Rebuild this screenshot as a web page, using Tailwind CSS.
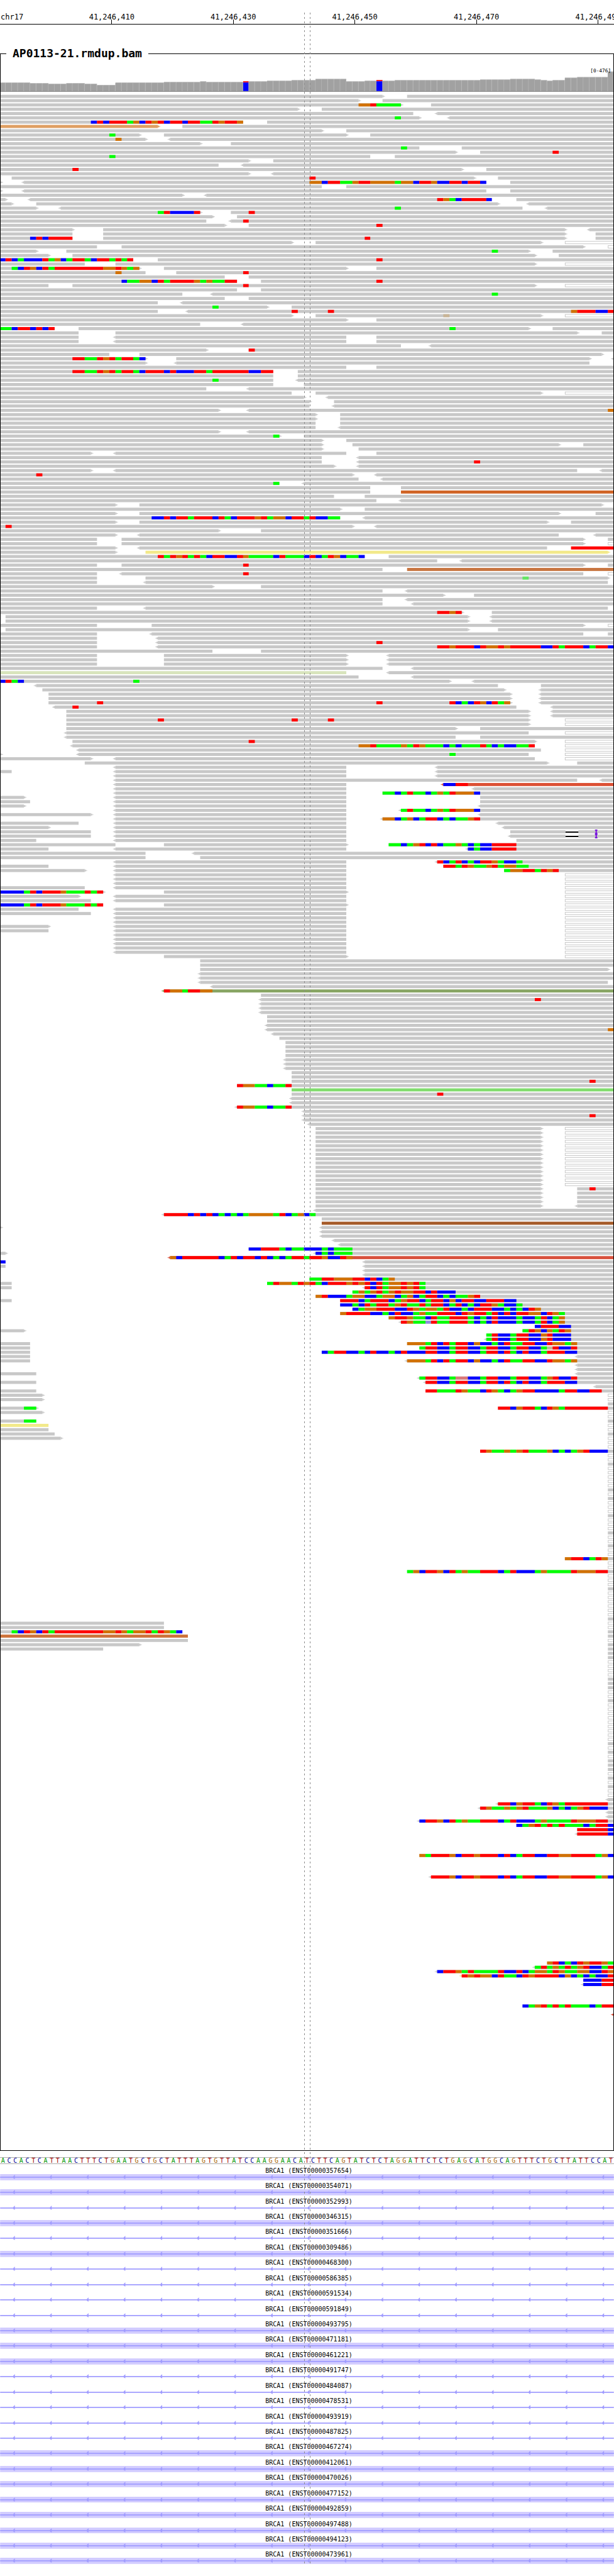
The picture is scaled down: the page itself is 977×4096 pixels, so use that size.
<!DOCTYPE html>
<html lang="en">
<head>
<meta charset="utf-8">
<meta name="viewport" content="width=device-width, initial-scale=1">
<title>chr17 BRCA1 – AP0113-21.rmdup.bam</title>
<script src="https://cdn.jsdelivr.net/npm/@tailwindcss/browser@4"></script>
</head>
<body class="bg-white text-black font-['DejaVu_Sans_Mono',monospace]">
<main class="relative overflow-hidden pb-5">

  <!-- Genomic ruler -->
  <header class="flex h-[39px] items-end overflow-hidden border-b border-black text-[12px] leading-[14px] whitespace-nowrap">
    <div class="w-[8.3%] shrink-0 pb-1 pl-px">chr17</div>
    <div class="flex w-[19.8%] shrink-0 flex-col items-center"><span class="-mb-[3px]">41,246,410</span><i class="h-[7px] w-px bg-black"></i></div>
    <div class="flex w-[19.8%] shrink-0 flex-col items-center"><span class="-mb-[3px]">41,246,430</span><i class="h-[7px] w-px bg-black"></i></div>
    <div class="flex w-[19.8%] shrink-0 flex-col items-center"><span class="-mb-[3px]">41,246,450</span><i class="h-[7px] w-px bg-black"></i></div>
    <div class="flex w-[19.8%] shrink-0 flex-col items-center"><span class="-mb-[3px]">41,246,470</span><i class="h-[7px] w-px bg-black"></i></div>
    <div class="flex w-[19.8%] shrink-0 flex-col items-center"><span class="-mb-[3px]">41,246,490</span><i class="h-[7px] w-px bg-black"></i></div>
  </header>

  <!-- Alignment track -->
  <fieldset class="mt-[34px] min-w-0 border border-black">
    <legend class="ml-[9px] px-[10px] text-[18px] leading-6 font-bold">AP0113-21.rmdup.bam</legend>
    <svg id="reads" viewBox="0 99 1000 3400" class="-mx-px block h-auto w-[calc(100%+2px)] max-w-none" role="img" aria-label="Coverage and aligned reads"></svg>
  </fieldset>

  <!-- Reference sequence -->
  <div id="sequence" class="mt-[10px] flex h-[11px] border-y border-[#aaaaaa] text-[10px] leading-[10px]"></div>

  <!-- Transcripts -->
  <ul id="genes" class="mt-px grid h-[635px] auto-rows-fr text-[10px]"></ul>

  <!-- Centre column guides -->
  <div class="absolute top-5 bottom-5 left-[49.5%] w-px bg-[repeating-linear-gradient(#8c8c8c_0_3px,transparent_3px_7px)]"></div>
  <div class="absolute top-5 bottom-5 left-[50.5%] w-px bg-[repeating-linear-gradient(#8c8c8c_0_3px,transparent_3px_7px)]"></div>
</main>

<script>
// One line per pileup row, units are bases (0-101):
//   a-b   read block, "<" / ">" add a strand arrow, "#rrggbb" sets its colour
//   oN    hollow read from N to the right edge
//   N:ACG mismatching bases from N (lower case = low quality)
//   xN    repeat the row N times, "." empty row
const rows = `
0-63> 67-101
0-59> 63-101
0-66> 71-101 59:GGTAAAA
0-49> 53-101
0-68 <72-101
0-69> <74-101 65:A
0-40 44-101 15:CTCTTTAGCTGTCTTCTTAATGTTG
0-26>#df9f63 30-101
0-53> 57-101
0-23> 27-57> 61-101 18:A
0-24> <28-101 19:G
0-33> 38-101
0-69 76-101 66:A
0-75> 79-101 91:T
0-61 65-101 18:A
0-41> 45-101
0-36 <40-101
0-76> 80-101 12:T
0-41> <45-101
2-78> 82-101 51:T
0-0> <4-80 84-101 51:GGCTTAAGTTGGGGAGGCTTGCCTTCTTC
0-53 57-101
0-0> <4-80 84-101
0-30> <34-101
0-1> <5-81 85-101 72:TGACTTTTC
0-2> 6-82> <87-101
0-6> <10-86 <90-101 65:A
0-33> 38-101 26:ATCCCCT 41:T
0-35> 39-101
0-34 <38-101 40:T
0-37> 41-101 62:T
0-12> 17-93> <97-101
0-12 17-93> 98-101
0-12 17-93> 98-101 5:CTCTTTT 60:T
0-48> 52-89> o93
0-16 20-96> o100
0-6> 11-87> 91-101 81:A
0-8> 12-88> 92-101
0-22 26-101 0:CTCACCCTAGCATTACTTATAT 62:T
0-14 19-88> o93
0-23> 27-57> 62-101 2:ACTGCTATTTTTTTTGGTGAG
0-24 29-101 19:G 40:T
0-37 41-101
0-39 43-101 62:T 20:CAAGGCTATTTTGAGAATT
0-8 12-88> o93 40:T
0-39 43-101
0-30 <35-101 81:A
0-37 41-101
0-26 <30-101
0-44> 48-101 35:A
0-26 <31-101 48:T 54:T 94:GTTTCCT
0-48> 52-89> o93 73:g
0-57> 62-101
0-33 <40-101
0-9 13-87> 91-101 74:A 0:AACTTCTCT
0-13 19-95> 99-101
x2 0-13 <19-57 62-101
0-66 <71-101
0-34> 41-101 41:T
0-18 23-99>
0-24> 29-97> <101-101 12:TTAATGTATTAC
0-24> <29-97
0-57 62-101
0-45 49-101 12:TTAATGTATTACTTTCTCCCTTATTTTTTCCTT
0-45 49-101
0-45 <49-101 35:A
0-45 50-101
0-34 <41-101
0-48 52-89> o93
0-50> <54-101
0-51> 55-101
0-51 <55-101
0-36> <41-101 100:G
x2 0-52> 56-101
0-52 56-101
0-52 <56-101
0-36> <41-101
0-46> 50-101 45:A
0-53> 57-101
0-53> 58-92> 96-101
0-53> 59-101
0-15> <19-57 62-101
0-53 <59-101
0-53 <59-101 78:T
0-55> <59-101
0-15> <19-95 <99-101
0-58> <62-101 6:T
0-59 <63-101
0-46 <50-101 45:A
0-61 66-101
0-61 66-101#d06426
0-55 60-101
0-62 <66-101
0-19> 23-99>
0-56> 60-101
0-19> 23-92> 98-101
0-56 <60-101 25:CCTCTTATTTCTACTTTGTAGGCTTATCCAA
0-19> 23-90> 94-101
0-58> <62-101 1:T
0-36> 43-101
0-19> <23-92 <98-101
0-16 20-96> 100-101
0-16 20-96> o100
0-19> <23-90 94:TTTTTTT
0-19> 24-100>#f2e98a
0-60 64-101 26:TATGTATACTTCCTGAAAACTAAACTCATGCAAC
0-72 <76-101
0-16 20-96> 100-101 40:T
0-63 67-101#c87641
0-16 <20-96 o100 40:T
0-16 24-100> 86:a
0-16 <24-100
0-35> 43-101
0-63 <67-101
0-73> 78-101
0-63 <67-101
0-63 <68-101
0-16 <24-100
0-76> 81-101 72:TTGT
x2 1-77> <81-101
0-16 25-96> o100
1-77> 82-101
0-16 <25-96 100-101
0-16 <26-101
0-16 <26-101 62:T
0-16 <26-101 72:TTGTTTCTGGTGTTTTTCCTATTTCATTC
0-35 43-101
x3 0-16 27-57> <64-101
0-63 <68-101
0-57#d8e4bc <64-101
0-59 <68-101
0-74> <78-101 0:CTAC 22:A
<6-82 89-101
7-83> <89-101
x2 8-84> <89-101
8-84> <89-101 16:T 62:T 74:TCACTGCTAG
<9-85 <91-101 12:T
x2 11-87> <91-101
11-87> o93 26:T 48:T 54:T
11-87> o93
11-75> 79-101
<11-87 o93
<11-75 79-101
12-88> o93 41:T
<12-88 o93 59:GGTAAAAGATGAAACACAAATACACCAAT
<13-89 o93
0-0> <13-87 o93 74:A
0-15> <19-88 o93
14-90> 95-101
<19-57 <72-101
0-2 <19-57 <72-101
<19-57 <72-101
<19-95 <99-101
<19-57 <73-101#dc5034 73:CCTT
<19-57 <78-101
<19-57 63-101 63:AACATAACAGATGGGC
0-4> <19-57 79-101
0-5 <19-57 79-101
0-4> <19-57 <79-101
<19-57 <66-101 66:ATAACAGATGGGC
0-15> <19-57 <79-101
<19-57 <63-101 63:GGCAGCATTCACAAGT
0-13 <19-57 <82-101
0-8> <19-57 <83-101
0-15 <19-57 84-101 indel
0-15 <19-57 <84-101 indel
0-6 <19-57 85-101
0-19 27-57> 64-101 64:AACAGTCTCAAGACACCTTTT
0-8 <19-57 <77-101 77:CACCTTTT
0-24 <32-101
0-24 33-101
<19-57 <72-101 72:TCATCACTTGACCA
0-8 <19-57 73-101 73:TTATGAAGTAGGAA
0-14> <19-57 83-101 83:AGGTTATGT
x3 <19-57 o93
0-14 <19-57 o93
0-17> 27-57> o93 0:CCCCATCTTTGAAATAT
0-13> <19-57 o93
0-15 <19-57 o93
0-17 27-57> o93 0:CCCCATCTTTGAAATAT
0-13 <19-57 o93
0-15 <19-57 o93
x2 <19-57 o93
0-8> <19-57 o93
0-8 <19-57 o93
x5 <19-57 o93
27-57> o93
x2 33-101
33-100>
x2 <33-101
<33-100
<35-101
<27-101#88a564 27:TGGATTGG
43-101
<43-101 88:T
x3 <43-101
x2 44-101
<44-101
<44-101 100:G
<45-101
46-101
x4 47-101
x3 <47-101
x2 48-101
48-101 97:T
39-101 39:TGGAACAAT
48-101#82dc6e
48-101 72:T
x2 <48-101
<39-101 39:TGGAACAAT
<50-101
<50-101 97:T
<50-101
<51-101
x14 52-89> o93
52-89> 95-101 97:T
x3 52-89> 95-101
52-89> <95-101
<52-101
<27-101 27:TTTTCTCTCACACAGGGGATCAGCA
53-101
53-101#a55a28
0-0> <53-101
x2 <53-101
<55-101
<56-101
41-101 41:CCTTTACAACCCACAAA
0-1> <52-101 52:CACAAA
<28-101#d8503c 28:GCTTTTTTCATCTTCTCACATTATTGCCTG
0-1 <60-101 0:C
0-1 <60-101
x2 <60-101
51-101 51:AATTGGGTTCTCAG
0-2 44-101 44:ATGGATGTACTTTGTGTCTAGGTGTA
0-2 <60-101 60:TCTAGGTGTA
58-101 58:AGAGTAGTGGTTCTCCC
52-101 52:GTCCCAGGCCAGGCAGCATTCACAAGT
0-2 56-101 56:TTTCATTTCAGTTCATTCGCTTCCTTTCC
56-101 56:CCACTATTAGTAATATTCATCACTTGACCA
58-101 58:CAGGTTTCCTGAGGATCCACTTTCCACACTG
56-101 56:GTTTTCCACTCCAGAATTTCTGTTATCTCTTGGCTGA
64-101 64:GTTGAACTAATTTACACTCCCACCATCAG
<66-101 66:TGAAcTAATTTACACTCCCACCATCAG
88-101 88:CTTTCC
0-4> 86-101 86:ATGCGATG
80-101 80:ATCCATTCCGTCCC
<80-101 80:ATCCATTCCGTCCC
0-5 67-101 67:GGGATCTATTCGCCACTAATTCCTGGAG
0-5 69-101 69:ATTCCATTCCATTCCATTCCAgTCCT
0-5 53-101 53:CATTCCACTCCACTCCCTTCCATTCCATTCTACTCCATTTCC
0-5 <95-101
0-5 <67-101 67:GGGATCTATTCGCCACTAATTCCTGGAG
x2 <95-101
0-6 <95-101
<69-101 69:ATTCCAttCCATTCCATTCCAGTCCT
0-6 <70-101 70:TTCCATTCCATTCTACTCCATTTCC
<98-101
0-6 70-101 70:TTAAATGAACTGACAGTTCCCCATTCCTT
x2 0-7> o100
100-101
0-6> 82-101 4:AA 82:TTCGTTACTGATTTTTTT
0-7> o100
o100
0-6 100-101 4:AA
0-8#f2e98a o100
0-8 o100
0-9 100-101
0-10> o100
x2 o100
79-101 79:TGAAGAGTAAAGCACAGTCCC
x2 o100
100-101
x5 o100
100-101
o100
100-101
x3 o100
100-101
x3 o100
100-101
x2 o100
100-101
x2 o100
93-101 93:GTTCATG
x2 o100
67-101 67:AGCTTGCTAGAATTTCATCCCAGAAAATGGGTT
x3 o100
100-101
x6 o100
100-101
0-27 o100
0-27 o100
0-30 100-101 2:ACTGCTATTTTTTTTGGTGAGGTATGAC
0-31#cd733c 100-101
0-31 o100
0-23> 100-101
0-17 100-101
x2 100-101
x4 o100
x3 100-101
x2 o100
100-101
x9 o100
100-101
o100
100-101
o100
x3 100-101
o100
100-101
o100
100-101
x2 o100
<100-101
<82-101 82:TTCGTTACTGATTTTTTT
<79-101 79:TGAAGAGTAAAGCACAGTCCC
x2 <100-101
<69-101 69:CTTGCTAGAATTTCATCCCAGAAAATGGGTT
85-101 85:CAGTATATAAACATTC
95-101 95:TTTTTC
<95-101 95:TTTTTC
x4 .
69-101 69:GATTTGCTTGTTTCTCATTCCTTGGTTTTAGC
x4 .
<71-101 71:TTTGCTTGTTTCTCATTCCTTGGTTTTAGC
x19 .
90-101 90:GTCACTGTTGA
<88-101 88:ATAGATAGTCCAT
<72-101 72:CTTGATAAAATCCTCAGGATGAAGGCCTG
<76-101#f2e98a 76:TGTGGCTAACTGTTTTCGCACACCT
96-101 96:CCCTT
<96-101 96:CCCTT
x4 .
86-101 86:CAGTATATAAACATT
.
<101-101#d8503c
`.trim().split("\n").flatMap(l => {
  const m = l.match(/^x(\d+) (.*)$/);
  return m ? Array(+m[1]).fill(m[2]) : [l];
});

const baseColour = {A:"#00ff00",C:"#0000ff",T:"#ff0000",G:"#d17105",a:"#64e664",c:"#8c8cdc",t:"#dc7878",g:"#c8b496"};
const GRAY = "#c8c8c8";
const X = c => Math.min(999, Math.max(1, Math.floor(c * 9.901)));
let out = "";
const rect = (x, y, w, h, f) => { if (w > 0 && h > 0) out += `<rect x="${x}" y="${y}" width="${w}" height="${h}" fill="${f}"/>`; };

// Coverage histogram: [first column, top]
const tops = [[0,134],[5,135],[8,136],[11,135],[14,136],[16,138],[19,134],[27,133],[33,132],[34,133],[40,132],[44,131],[48,130],[52,128],[57,132],[60,131],[62,130],[63,131],[65,130],[79,129],[84,128],[88,129],[89,130],[90,131],[91,130],[93,126],[95,125],[100,116]];
tops.forEach(([c, t], i) => {
  const end = i + 1 < tops.length ? tops[i + 1][0] : 101;
  for (let k = c; k < end; k++) {
    const x = X(k), w = X(k + 1) - x;
    if (k === 40 || k === 62) {
      rect(x, t, w, 2, "#ff0000");
      rect(x, t + 2, w, 146 - t, "#0000ff");
    } else {
      rect(x, t, w, 148 - t, "#b0b0b0");
      rect(x, t + 1, w - 1, 147 - t, "#a1a1a1");
    }
  }
});
rect(1, 148, 998, 1, "#787878");
out += `<text x="995" y="117" text-anchor="end" class="text-[8px]">[0-476]</text>`;

rows.forEach((line, r) => {
  const y = 154 + 7 * r;
  for (const tok of line.split(" ")) {
    let m;
    if ((m = tok.match(/^(<?)(\d+)-(\d+)(>?)(#\w+)?$/))) {
      const f = m[5] || GRAY, a = X(+m[2]), b = X(+m[3]);
      rect(a, y, b - a, 5, f);
      if (m[1]) { rect(a - 2, y + 1, 2, 3, f); rect(a - 4, y + 2, 2, 1, f); }
      if (m[4]) { rect(b, y + 1, 2, 3, f); rect(b + 2, y + 2, 2, 1, f); }
    } else if ((m = tok.match(/^o(\d+)$/))) {
      const a = X(+m[1]);
      rect(a, y, 999 - a, 5, GRAY);
      rect(a + 1, y + 1, 998 - a, 3, "#ffffff");
    } else if ((m = tok.match(/^(\d+):(\w+)$/))) {
      let c = +m[1];
      for (const run of m[2].match(/(.)\1*/g)) {
        rect(X(c), y, X(c + run.length) - X(c), 5, baseColour[run[0]]);
        c += run.length;
      }
    } else if (tok === "indel") {
      rect(921, y, 21, 5, "#ffffff");
      rect(921, y + 2, 21, 2, "#000000");
      rect(970, y - 1, 2, 7, "#7814dc");
      rect(969, y - 1, 4, 2, "#7814dc");
      rect(969, y + 4, 4, 2, "#7814dc");
    }
  }
});
document.getElementById("reads").innerHTML = out;

const letterClass = {A:"text-[#009600]",C:"text-[#000096]",T:"text-[#a00000]",G:"text-[#aa6400]"};
document.getElementById("sequence").innerHTML =
  [..."ACCACTCATTAACTTTCTGAATGCTGCTATTTAGTGTTATCCAAGGAACATCTTCAGTATCTCTAGGATTCTCTGAGCATGGCAGTTTCTGCTTATTCCAT"]
    .map(b => `<span class="w-0 flex-1 text-center ${letterClass[b]}">${b}</span>`).join("");

// "+" marks transcripts with an exon across this window
const genes = "357654+ 354071+ 352993 346315+ 351666 309486+ 468300 586385 591534 591849 493795+ 471181+ 461221+ 491747 484087 478531 493919 487825 467274+ 412061+ 470026+ 477152+ 492859+ 497488+ 494123+ 473961+".split(" ");
let arrows = "";
for (let k = 0; k < 17; k++) { const x = 20 + 60 * k; arrows += `M${x} 5l2 -2l2 -2v7l-2 -1z`; }
document.getElementById("genes").innerHTML = genes.map(g => `
  <li class="flex min-h-0 flex-col">
    <span class="flex-1 pt-1 pl-[6px] text-center leading-[11px]">BRCA1 (ENST00000${g.replace("+", "")})</span>
    <svg viewBox="0 0 1000 10" class="block h-auto w-full shrink-0" aria-hidden="true">${g.endsWith("+") ? '<rect width="1000" height="10" fill="#d2ccff"/>' : ""}<path d="M0 4h1000v2H0z${arrows}" fill="#a09cff"/></svg>
  </li>`).join("");
</script>
</body>
</html>
